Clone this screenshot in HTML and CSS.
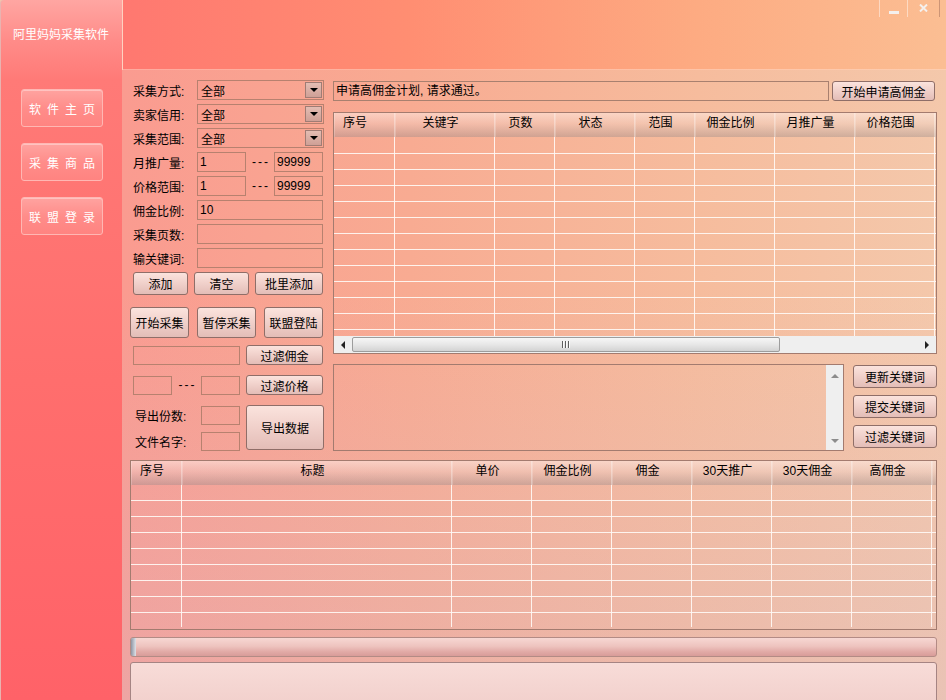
FILE: index.html
```html
<!DOCTYPE html>
<html lang="zh-CN">
<head>
    <meta charset="UTF-8">
    <title>阿里妈妈采集软件</title>
    <link rel="stylesheet" href="styles.css">
</head>
<body>
<div class="window">
    <aside class="sidebar">
        <div class="brand">阿里妈妈采集软件</div>
        <nav class="nav">
            <button class="nav-btn">软件主页</button>
            <button class="nav-btn">采集商品</button>
            <button class="nav-btn">联盟登录</button>
        </nav>
    </aside>

    <div class="main">
        <header class="topbar">
            <div class="win-ctrls">
                <span class="ctrl"><span class="min-bar"></span></span>
                <span class="ctrl">
                    <svg width="9" height="8" viewBox="0 0 9 8"><path d="M1 0.5L8 7.5M8 0.5L1 7.5" stroke="#f4f0ee" stroke-width="2"/></svg>
                </span>
            </div>
        </header>

        <div class="work">
            <div class="upper">
                <!-- collect options -->
                <div class="opts">
                    <div class="row"><label>采集方式:</label><div class="select"><span>全部</span><i class="drop"></i></div></div>
                    <div class="row"><label>卖家信用:</label><div class="select"><span>全部</span><i class="drop"></i></div></div>
                    <div class="row"><label>采集范围:</label><div class="select"><span>全部</span><i class="drop"></i></div></div>
                    <div class="row"><label>月推广量:</label><input class="field half" value="1"><span class="dash">---</span><input class="field half" value="99999"></div>
                    <div class="row"><label>价格范围:</label><input class="field half" value="1"><span class="dash">---</span><input class="field half" value="99999"></div>
                    <div class="row"><label>佣金比例:</label><input class="field full" value="10"></div>
                    <div class="row"><label>采集页数:</label><input class="field full" value=""></div>
                    <div class="row"><label>输关键词:</label><input class="field full" value=""></div>

                    <div class="btn-row">
                        <button class="btn">添加</button>
                        <button class="btn">清空</button>
                        <button class="btn wide">批里添加</button>
                    </div>
                    <div class="act-row">
                        <button class="btn">开始采集</button>
                        <button class="btn">暂停采集</button>
                        <button class="btn">联盟登陆</button>
                    </div>
                    <div class="filter-row">
                        <input class="field long" value="">
                        <button class="btn">过滤佣金</button>
                    </div>
                    <div class="filter-row gap">
                        <input class="field tiny" value="">
                        <span class="dash small">---</span>
                        <input class="field tiny" value="">
                        <button class="btn">过滤价格</button>
                    </div>
                    <div class="export">
                        <div class="export-fields">
                            <div class="pair"><label>导出份数:</label><input class="field tiny" value=""></div>
                            <div class="pair"><label>文件名字:</label><input class="field tiny" value=""></div>
                        </div>
                        <button class="btn">导出数据</button>
                    </div>
                </div>

                <!-- keyword side -->
                <div class="side">
                    <div class="msg-row">
                        <div class="msg">申请高佣金计划, 请求通过。</div>
                        <button class="btn">开始申请高佣金</button>
                    </div>

                    <div class="tbl kw-tbl">
                        <div class="thead">
                            <span>序号</span><span>关键字</span><span>页数</span><span>状态</span>
                            <span>范围</span><span>佣金比例</span><span>月推广量</span><span>价格范围</span><span></span>
                        </div>
                        <div class="tbody">
                            <span></span><span></span><span></span><span></span>
                            <span></span><span></span><span></span><span></span><span></span>
                        </div>
                        <div class="hscroll">
                            <i class="arrow left"></i>
                            <div class="thumb"><i class="grip"></i></div>
                            <div class="track"></div>
                            <i class="arrow right"></i>
                        </div>
                    </div>

                    <div class="kw-row">
                        <div class="memo">
                            <div class="vscroll"><i class="up"></i><i class="down"></i></div>
                        </div>
                        <div class="kw-btns">
                            <button class="btn">更新关键词</button>
                            <button class="btn">提交关键词</button>
                            <button class="btn">过滤关键词</button>
                        </div>
                    </div>
                </div>
            </div>

            <div class="tbl res-tbl">
                <div class="thead">
                    <span>序号</span><span>标题</span><span>单价</span><span>佣金比例</span>
                    <span>佣金</span><span>30天推广</span><span>30天佣金</span><span>高佣金</span><span></span>
                </div>
                <div class="tbody">
                    <span></span><span></span><span></span><span></span>
                    <span></span><span></span><span></span><span></span><span></span>
                </div>
            </div>

            <div class="progress"><span class="progress-bar"></span></div>
            <div class="status"></div>
        </div>
    </div>
</div>
</body>
</html>
```

FILE: styles.css
```css
* {
    box-sizing: border-box;
}
body {
    margin: 0;
    font-family: "Liberation Sans", "Noto Sans CJK SC", sans-serif;
    font-size: 12px;
    color: #000;
    background: #f3c3ac;
}
.window {
    display: flex;
    width: 946px;
    height: 700px;
    overflow: hidden;
}

/* left menu */
.sidebar {
    width: 122px;
    flex: none;
    border-left: 1px solid #e9b3b0;
    border-top-left-radius: 4px;
    background: linear-gradient(to bottom, #ffa6a2 0, #ff8c89 40px, #ff7a77 80px, #ff6e6d 380px, #ff6268 100%);
}
.brand {
    height: 70px;
    line-height: 70px;
    padding-left: 12px;
    color: #fff;
}
.nav {
    display: flex;
    flex-direction: column;
    gap: 16px;
    padding: 19px 0 0 20px;
}
.nav-btn {
    width: 82px;
    height: 38px;
    padding: 0 0 0 6px;
    font: inherit;
    letter-spacing: 6px;
    color: #fff;
    border: 1px solid #ffb7b3;
    border-radius: 3px;
    background: linear-gradient(#ffa3a0, #ff8d8a 50%, #ff8481);
    box-shadow: inset 0 1px rgba(255, 255, 255, 0.35);
    cursor: pointer;
}

/* right part */
.main {
    flex: 1;
    display: flex;
    flex-direction: column;
    position: relative;
}
.topbar {
    height: 70px;
    flex: none;
    border-left: 1px solid rgba(255, 215, 205, 0.8);
    border-bottom: 1px solid rgba(255, 220, 205, 0.5);
    background: linear-gradient(to right, #ff7870, #ff8e72 35%, #fdab82 70%, #fbbe93);
}
.win-ctrls {
    position: absolute;
    top: 0;
    right: 6px;
    display: flex;
}
.ctrl {
    width: 28px;
    height: 17px;
    display: flex;
    align-items: center;
    justify-content: center;
    border-left: 1px solid rgba(255, 255, 255, 0.45);
}
.ctrl:last-child {
    width: 33px;
    padding-bottom: 2px;
    border-right: 1px solid rgba(160, 110, 90, 0.5);
}
.min-bar {
    width: 10px;
    height: 3px;
    margin-top: 8px;
    background: #f4f0ee;
}

.work {
    flex: 1;
    padding: 10px 9px 0 8px;
    background:
        linear-gradient(to bottom, rgba(255, 255, 255, 0) 35%, rgba(214, 184, 200, 0.35)),
        linear-gradient(to right, #fa9b90, #f8ab92 35%, #f6bc9d 70%, #f4c8ab);
}
.upper {
    display: flex;
    gap: 9px;
    height: 372px;
}

/* option form */
.opts {
    width: 194px;
    flex: none;
}
.row {
    display: flex;
    align-items: center;
    height: 20px;
    margin-bottom: 4px;
    padding-left: 3px;
}
.row label {
    width: 64px;
    flex: none;
}
.select {
    width: 127px;
    height: 20px;
    display: flex;
    align-items: center;
    padding-left: 3px;
    border: 1px solid #b7816f;
}
.drop {
    margin-left: auto;
    margin-right: 1px;
    width: 17px;
    height: 16px;
    display: flex;
    align-items: center;
    justify-content: center;
    border: 1px solid #a07c74;
    background: linear-gradient(#e4bdb3, #cfa096);
}
.drop::after {
    content: "";
    border-left: 4px solid transparent;
    border-right: 4px solid transparent;
    border-top: 4px solid #000;
}
.field {
    height: 20px;
    padding: 0 2px;
    font: inherit;
    color: #000;
    background: transparent;
    border: 1px solid #b7816f;
    outline: none;
}
.field.half { width: 49px; }
.field.full { width: 126px; }
.field.long { width: 107px; height: 19px; }
.field.tiny { width: 39px; height: 19px; }
.dash {
    width: 28px;
    text-align: center;
    letter-spacing: 2px;
    padding-left: 2px;
}
.dash.small {
    width: 29px;
}

.btn {
    padding: 0;
    font: inherit;
    color: #000;
    border: 1px solid #8f6e68;
    border-radius: 3px;
    background: linear-gradient(#fbe3dd, #f0d0ca 50%, #e3bdb7);
    cursor: pointer;
}
.btn-row {
    display: flex;
    gap: 6px;
    padding-left: 3px;
    margin-top: 1px;
}
.btn-row .btn {
    width: 55px;
    height: 23px;
}
.btn-row .btn.wide {
    width: 68px;
}
.act-row {
    display: flex;
    justify-content: space-between;
    width: 193px;
    margin-top: 12px;
}
.act-row .btn {
    width: 59px;
    height: 31px;
}
.filter-row {
    display: flex;
    align-items: center;
    height: 20px;
    padding-left: 3px;
    margin-top: 7px;
}
.filter-row.gap {
    margin-top: 10px;
}
.filter-row .btn {
    width: 77px;
    height: 20px;
    margin-left: 6px;
}
.export {
    display: flex;
    padding-left: 3px;
    margin-top: 10px;
}
.export-fields {
    width: 107px;
}
.pair {
    display: flex;
    align-items: center;
    height: 19px;
    margin-top: 1px;
}
.pair + .pair {
    margin-top: 7px;
}
.pair label {
    width: 68px;
    padding-left: 2px;
}
.export .btn {
    width: 78px;
    height: 45px;
    margin-left: 6px;
}

/* keyword side */
.side {
    width: 604px;
    flex: none;
}
.msg-row {
    display: flex;
    height: 20px;
    margin-top: 1px;
}
.msg {
    width: 496px;
    line-height: 18px;
    padding-left: 2px;
    border: 1px solid #a8806f;
}
.msg-row .btn {
    width: 103px;
    margin-left: 3px;
}

.tbl {
    display: flex;
    flex-direction: column;
    border: 1px solid #a37b6f;
}
.kw-tbl {
    height: 242px;
    margin-top: 11px;
}
.thead {
    display: grid;
    height: 24px;
    flex: none;
    background: linear-gradient(rgba(255, 238, 232, 0.55), rgba(236, 214, 208, 0.35) 45%, rgba(150, 138, 138, 0.4));
}
.thead span {
    padding: 1px 8px 0 0;
    line-height: 18px;
    text-align: center;
    white-space: nowrap;
    border-right: 1px solid rgba(255, 255, 255, 0.35);
    box-shadow: inset 1px 0 rgba(255, 255, 255, 0.2);
}
.thead span:first-child {
    padding-left: 9px;
    text-align: left;
}
.thead span:last-child,
.tbody span:last-child {
    border-right: none;
}
.tbody {
    display: grid;
    flex: 1;
    background: repeating-linear-gradient(to bottom, transparent 0 15px, rgba(255, 250, 246, 0.9) 15px 16px);
}
.tbody span {
    border-right: 1px solid rgba(255, 250, 246, 0.9);
}
.kw-tbl .thead,
.kw-tbl .tbody {
    grid-template-columns: 61px 100px 60px 80px 60px 80px 80px 80px 1fr;
}
.kw-tbl .tbody {
    background-position: 0 1px;
}
.res-tbl .thead,
.res-tbl .tbody {
    grid-template-columns: 51px 270px 80px 80px 80px 80px 80px 80px 1fr;
}
.res-tbl .tbody {
    margin-bottom: 2px;
}

.hscroll {
    display: flex;
    height: 17px;
    flex: none;
    background: #efefef;
}
.arrow {
    width: 18px;
    display: flex;
    align-items: center;
    justify-content: center;
}
.arrow::after {
    content: "";
    border-top: 4px solid transparent;
    border-bottom: 4px solid transparent;
}
.arrow.left::after {
    border-right: 4px solid #222;
}
.arrow.right::after {
    border-left: 4px solid #222;
}
.thumb {
    width: 428px;
    margin: 1px 0;
    display: flex;
    align-items: center;
    justify-content: center;
    border: 1px solid #9d9d9d;
    border-radius: 2px;
    background: linear-gradient(#f7f7f7, #e7e7e7 50%, #d3d3d3);
}
.grip {
    width: 8px;
    height: 7px;
    background: repeating-linear-gradient(to right, #5e5e5e 0 1px, #fafafa 1px 2px, transparent 2px 3px);
}
.track {
    flex: 1;
}

.kw-row {
    display: flex;
    height: 87px;
    margin-top: 10px;
}
.memo {
    width: 511px;
    display: flex;
    justify-content: flex-end;
    border: 1px solid #a37b6f;
}
.vscroll {
    width: 17px;
    display: flex;
    flex-direction: column;
    justify-content: space-between;
    align-items: center;
    padding: 9px 0 7px;
    background: #efefef;
}
.vscroll i {
    border-left: 4px solid transparent;
    border-right: 4px solid transparent;
}
.vscroll .up {
    border-bottom: 4px solid #8c8c8c;
}
.vscroll .down {
    border-top: 4px solid #8c8c8c;
}
.kw-btns {
    width: 84px;
    margin-left: 9px;
    padding-top: 1px;
    display: flex;
    flex-direction: column;
    gap: 7px;
}
.kw-btns .btn {
    height: 23px;
}

/* results */
.res-tbl {
    width: 807px;
    height: 170px;
    margin-top: 8px;
}
.progress {
    display: block;
    width: 807px;
    height: 20px;
    margin-top: 7px;
    border: 1px solid #b38b85;
    border-radius: 3px;
    background: linear-gradient(#f7d7d3, #eec4bf 45%, #e2aba7 75%, #d89c99);
}
.progress-bar {
    display: block;
    width: 5px;
    height: 100%;
    border-radius: 2px 0 0 2px;
    background: linear-gradient(to right, #8e96a4, #dfe2e8);
}
.status {
    width: 807px;
    height: 40px;
    margin-top: 5px;
    border: 1px solid #a58483;
    border-radius: 3px 3px 0 0;
    background: linear-gradient(#f8dcd8, #f2d1cd);
}
```
